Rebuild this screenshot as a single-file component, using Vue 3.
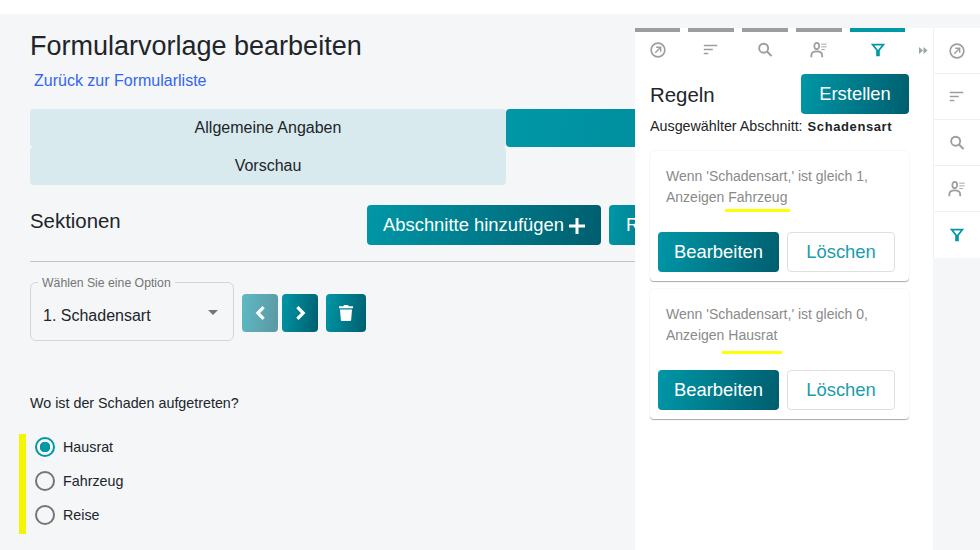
<template>
  <div class="page">
    <div class="topband"></div>
    <div class="stage">
      <main class="main">
        <h1 class="title">Formularvorlage bearbeiten</h1>
        <a class="back">Zurück zur Formularliste</a>
        <div class="tabs">
          <div class="tab">Allgemeine Angaben</div>
          <div class="tab active"></div>
          <div class="tab">Vorschau</div>
        </div>
        <div class="section-head">
          <div class="section-title">Sektionen</div>
          <div class="section-actions">
            <button class="btn add">Abschnitte hinzufügen
              <svg class="plus" viewBox="0 0 16 16" width="16" height="16"><path d="M6.500 0h3v6.500H16v3H9.500V16h-3V9.500H0v-3h6.500z" fill="#fff"/></svg>
            </button>
            <button class="btn next-btn">Regeln</button>
          </div>
        </div>
        <div class="divider"></div>
        <div class="select-row">
          <fieldset class="select">
            <legend>Wählen Sie eine Option</legend>
            <span>1. Schadensart</span>
            <i class="caret"></i>
          </fieldset>
          <button class="btn icon faded">
            <svg viewBox="0 0 12 18" width="11" height="16"><path d="M9.500 2.500 3 9l6.500 6.500" fill="none" stroke="#fff" stroke-width="3.600"/></svg>
          </button>
          <button class="btn icon">
            <svg viewBox="0 0 12 18" width="11" height="16"><path d="M2.500 2.500 9 9l-6.500 6.500" fill="none" stroke="#fff" stroke-width="3.600"/></svg>
          </button>
          <button class="btn icon trash">
            <svg viewBox="0 0 14 16" width="14" height="16"><path d="M5 0h4l.7 1.200H14v2H0v-2h4.300zM1 4.500h12l-.8 10.200c0 .7-.6 1.300-1.300 1.300H3.100c-.7 0-1.300-.6-1.300-1.300z" fill="#fff"/></svg>
          </button>
        </div>
        <p class="question">Wo ist der Schaden aufgetreten?</p>
        <div class="radios">
          <label v-for="(o, i) in options" :key="o" class="radio">
            <span class="dot" :class="{ on: i === 0 }"></span>{{ o }}
          </label>
        </div>
      </main>

      <aside class="panel">
        <div class="panel-tabs">
          <div v-for="t in tabs" :key="t.k" class="ptab" :class="[t.c, { cur: t.k === 'filter' }]">
            <svg viewBox="0 0 20 20" width="18" height="18" v-html="icons[t.k]"></svg>
          </div>
          <div class="more">
            <svg viewBox="0 0 10 10" width="9" height="9"><path d="M0 1l4.500 4L0 9zM5 1l4.500 4L5 9z" fill="#9aa5a8"/></svg>
          </div>
        </div>
        <div class="panel-head">
          <div class="panel-title">Regeln</div>
          <button class="btn create">Erstellen</button>
        </div>
        <div class="selected">Ausgewählter Abschnitt: <b>Schadensart</b></div>
        <div v-for="r in rules" :key="r.name" class="card">
          <div class="rule">
            Wenn 'Schadensart,' ist gleich {{ r.v }},<br />
            Anzeigen <span class="mark" :class="r.cls">{{ r.name }}</span>
          </div>
          <div class="card-actions">
            <button class="btn edit">Bearbeiten</button>
            <button class="del">Löschen</button>
          </div>
        </div>
      </aside>

      <nav class="rail">
        <div v-for="t in tabs" :key="t.k" class="rail-item">
          <svg viewBox="0 0 20 20" width="18" height="18" v-html="icons[t.k]"></svg>
        </div>
      </nav>
    </div>
  </div>
</template>

<script setup>
const options = ['Hausrat', 'Fahrzeug', 'Reise']
const tabs = [
  { k: 'open', c: 'w1' },
  { k: 'sort', c: 'w2' },
  { k: 'search', c: 'w2' },
  { k: 'user', c: 'w2' },
  { k: 'filter', c: 'w3' }
]
const rules = [
  { v: 1, name: 'Fahrzeug', cls: 'first' },
  { v: 0, name: 'Hausrat', cls: 'second' }
]
const g = '#9d9d9d'
const icons = {
  open: `<circle cx="10" cy="10" r="7.600" fill="none" stroke="${g}" stroke-width="1.800"/><path d="M7 13l5.500-5.500M8 7h5v5" fill="none" stroke="${g}" stroke-width="1.600"/>`,
  sort: `<path d="M2 5h15M2 9.500h10M2 14h5" fill="none" stroke="${g}" stroke-width="1.700"/>`,
  search: `<circle cx="8.500" cy="8" r="5" fill="none" stroke="${g}" stroke-width="2.100"/><path d="M12 11.500l5.300 5.300" stroke="${g}" stroke-width="2.300"/>`,
  user: `<ellipse cx="7.500" cy="5.500" rx="2.700" ry="3.500" fill="none" stroke="${g}" stroke-width="1.900"/><path d="M1.500 18v-2c0-3 2-4.500 6-4.500s6 1.500 6 4.500v2" fill="none" stroke="${g}" stroke-width="2"/><path d="M12.500 3.500h6M12.500 6.500h6M12.500 9.500h4" stroke="${g}" stroke-width="1"/>`,
  filter: `<path fill-rule="evenodd" d="M2 3h16l-6 7.500V17H8v-6.500zM6 5l4 5 4-5z" fill="#0097a7"/>`
}
</script>

<style scoped>
.page { width: 980px; height: 550px; overflow: hidden; font-family: "Liberation Sans", Arial, sans-serif; color: #212529; background: #fff; display: flex; flex-direction: column; }
.topband { height: 14px; flex: none; background: #fff; }
.stage { position: relative; flex: 1; background: #f4f6f8; overflow: hidden; }
.main { padding: 14px 0 0 30px; width: 980px; box-sizing: border-box; }
.title { margin: 0; font-size: 27px; font-weight: 400; line-height: 36px; }
.back { display: block; margin: 5px 0 0 4px; font-size: 16px; line-height: 24px; color: #3366ee; }
.tabs { display: grid; grid-template-columns: 476px 476px; grid-auto-rows: 38px; margin-top: 16px; }
.tab { display: flex; align-items: center; justify-content: center; background: #d8eaee; font-size: 16px; border-radius: 4px; }
.tab.active { background: linear-gradient(100deg, #0097a7, #006676 180%); }
.section-head { display: flex; margin-top: 20px; height: 40px; position: relative; }
.section-title { font-size: 20.400px; line-height: 32px; }
.section-actions { position: absolute; left: 337px; top: 0; display: flex; gap: 8px; white-space: nowrap; }
.btn { border: 0; border-radius: 4px; color: #fff; font-family: inherit; background: linear-gradient(100deg, #0097a7, #005e6e); padding: 0; display: inline-flex; align-items: center; justify-content: center; }
.add { width: 234px; height: 40px; font-size: 18.400px; gap: 5px; }
.plus { margin-top: 2px; }
.next-btn { width: 100px; height: 40px; font-size: 18.400px; justify-content: flex-start; padding-left: 17px; }
.divider { height: 1px; background: #c4c4c4; margin-top: 16px; width: 605px; }
.select-row { display: flex; align-items: center; margin-top: 20px; }
.select { position: relative; box-sizing: border-box; width: 204px; height: 65px; margin: -6px 8px 0 0; padding: 0 12px; border: 1px solid #d3d5d8; border-radius: 6px; display: flex; align-items: center; font-size: 16px; }
.select legend { margin-left: -5px; padding: 0 4px; font-size: 12.250px; color: #757575; line-height: 12px; transform: translateY(1px); }
.select span { margin-top: 3px; }
.caret { position: absolute; right: 15px; top: 22px; border: 5px solid transparent; border-top-color: #757575; border-bottom: 0; }
.icon { width: 36px; height: 38px; margin: 2px 4px 0 0; }
.faded { opacity: .62; }
.trash { width: 40px; margin-left: 4px; }
.question { margin: 53px 0 0; font-size: 14.300px; line-height: 18px; }
.radios { display: flex; flex-direction: column; margin: 22px 0 0 -11px; width: 200px; height: 100px; border-left: 7px solid #f5f500; box-sizing: border-box; padding-left: 9px; }
.radio { display: flex; align-items: center; flex: none; height: 34px; font-size: 14.300px; gap: 8px; }
.radio:first-child { margin-top: -4px; }
.dot { width: 20px; height: 20px; box-sizing: border-box; border: 2px solid #757575; border-radius: 50%; background: transparent; }
.dot.on { border-color: #0097a7; background: radial-gradient(circle, #0097a7 0 5px, transparent 5.500px); }
.panel { position: absolute; left: 635px; top: 14px; bottom: 0; width: 298px; background: #fff; box-sizing: border-box; padding: 0 24px 0 15px; }
.panel-tabs { display: flex; gap: 8px; margin-left: -15px; height: 28px; position: relative; }
.ptab { border-top: 4px solid #9d9d9d; box-sizing: border-box; height: 36px; display: flex; justify-content: center; padding-top: 9px; }
.w1 { width: 45px; }
.w2 { width: 46px; }
.w3 { width: 55px; }
.cur { border-top-color: #0097a7; }
.more { position: absolute; left: 284px; top: 18px; line-height: 0; }
.panel-head { display: flex; justify-content: space-between; align-items: center; margin-top: 18px; height: 40px; }
.panel-title { font-size: 20.400px; padding-top: 3px; }
.create { width: 108px; height: 40px; font-size: 18.400px; }
.selected { font-size: 14.300px; line-height: 20px; margin-top: 2px; white-space: nowrap; width: 270px; }
.selected b { margin-left: 1px; font-size: 13px; letter-spacing: .6px; }
.card { width: 259px; height: 130px; margin-top: 14px; box-sizing: border-box; border-radius: 4px; box-shadow: 0 1px 1px rgba(0, 0, 0, .34), 0 -1px 1px #f8f8f8; padding: 15px 8px 0; }
.card + .card { margin-top: 8px; }
.rule { padding-left: 8px; font-size: 14px; line-height: 21px; color: #8a8a8a; }
.mark { position: relative; }
.mark::after { content: ""; position: absolute; height: 3px; background: #ffff00; }
.first::after { left: -3px; right: -3px; bottom: -7px; }
.second::after { left: -6px; right: -5px; bottom: -11px; }
.card-actions { display: flex; gap: 8px; margin-top: 24px; }
.edit { width: 121px; height: 40px; font-size: 18.400px; }
.del { width: 108px; height: 40px; border: 1px solid #dfdfdf; border-radius: 4px; background: #fff; font: 18.400px "Liberation Sans", Arial, sans-serif; color: #1a9cac; padding: 0; }
.rail { position: absolute; left: 933px; top: 14px; width: 47px; background: #fff; border-left: 1px solid #f0f0f0; box-sizing: border-box; }
.rail-item { height: 46px; box-sizing: border-box; display: flex; align-items: center; justify-content: center; border-bottom: 1px solid #f0f0f0; }
.rail-item:last-child { border-bottom: 0; }
</style>
